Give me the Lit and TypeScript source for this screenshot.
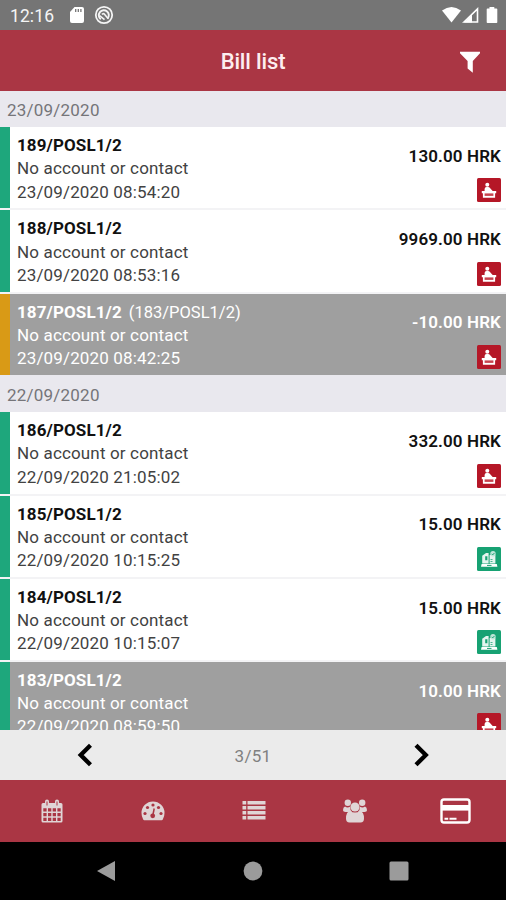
import { LitElement, html, css, svg, nothing } from "lit";
import { customElement, property } from "lit/decorators.js";

type Source = "desk" | "online";

interface Bill {
  no: string;
  ref?: string;
  time: string;
  amount: string;
  source: Source;
  bar?: "orange";
  muted?: boolean;
}

const groups: { date: string; bills: Bill[] }[] = [
  {
    date: "23/09/2020",
    bills: [
      { no: "189/POSL1/2", time: "23/09/2020 08:54:20", amount: "130.00 HRK", source: "desk" },
      { no: "188/POSL1/2", time: "23/09/2020 08:53:16", amount: "9969.00 HRK", source: "desk" },
      { no: "187/POSL1/2", ref: "(183/POSL1/2)", time: "23/09/2020 08:42:25", amount: "-10.00 HRK", source: "desk", bar: "orange", muted: true },
    ],
  },
  {
    date: "22/09/2020",
    bills: [
      { no: "186/POSL1/2", time: "22/09/2020 21:05:02", amount: "332.00 HRK", source: "desk" },
      { no: "185/POSL1/2", time: "22/09/2020 10:15:25", amount: "15.00 HRK", source: "online" },
      { no: "184/POSL1/2", time: "22/09/2020 10:15:07", amount: "15.00 HRK", source: "online" },
      { no: "183/POSL1/2", time: "22/09/2020 08:59:50", amount: "10.00 HRK", source: "desk", muted: true },
    ],
  },
];

const deskGlyph = svg`
  <rect width="24" height="24" rx="1.5" fill="#b51727"/>
  <g fill="#fff">
    <circle cx="10.3" cy="6.8" r="2"/>
    <path d="M7.6 13.2V11q0-2 2-2h1.4q1.4 0 2.2 1.2l2.7 3z"/>
    <path d="M4.8 13h14.4v2.2h-1.1v4.6H5.9v-4.6H4.8z"/>
  </g>
  <path d="M7.6 15.4h8.8v2.5H7.6z" fill="#c8434f"/>`;

const onlineGlyph = svg`
  <rect width="24" height="24" rx="1.5" fill="#17a273"/>
  <path d="M5.2 16.500V8.800L9 6h2.600v10.500zM12.600 8h5.800v8.500h-5.800z" fill="#e4f5ef"/>
  <path d="M4.600 17h15.200l.6 2.800H4z" fill="#fff"/>
  <path d="M8.200 9.300h2.200v4H8.200zM13.500 12.200h2v.9h-2zM13.500 14.200h2v.9h-2z" fill="#17a273"/>
  <circle cx="16" cy="6.800" r="2.700" fill="#bfe6d9"/>
  <path d="M14.600 6.800l1.100 1.100 1.800-2M10 18.400h4.500" stroke="#17a273" fill="none"/>`;

@customElement("bill-row")
export class BillRow extends LitElement {
  @property({ attribute: false }) bill!: Bill;

  static styles = css`
    :host { display: block; }
    .row { display: flex; height: 81.4px; box-sizing: border-box; background: #fff; color: #424242; border-left: 10px solid #1ea77c; padding: 7px 5px 0 7px; }
    .orange { border-left-color: #d99a16; }
    .muted { background: #9f9f9f; color: #fff; }
    .info { flex: 1; font-size: 17px; line-height: 23.2px; letter-spacing: 0.15px; white-space: nowrap; }
    .no { font-weight: 700; color: #111; letter-spacing: 0.1px; }
    .ref { margin-left: 7px; font-size: 16.5px; letter-spacing: 0; }
    .muted .no, .muted .amount { color: #fff; }
    .side { display: flex; flex-direction: column; align-items: flex-end; padding-top: 9.8px; }
    .amount { font-size: 17px; line-height: 24px; font-weight: 600; color: #111; letter-spacing: 0.12px; white-space: nowrap; }
    .glyph { display: block; width: 24px; height: 24px; margin-top: 10.5px; }
  `;

  render() {
    const b = this.bill;
    return html`
      <div class="row ${b.bar ?? ""} ${b.muted ? "muted" : ""}">
        <div class="info">
          <div><span class="no">${b.no}</span>${b.ref ? html`<span class="ref">${b.ref}</span>` : nothing}</div>
          <div class="contact">No account or contact</div>
          <div class="time">${b.time}</div>
        </div>
        <div class="side">
          <span class="amount">${b.amount}</span>
          <svg class="glyph" viewBox="0 0 24 24">${b.source === "desk" ? deskGlyph : onlineGlyph}</svg>
        </div>
      </div>`;
  }
}

@customElement("app-root")
export class AppRoot extends LitElement {
  static styles = css`
    :host { display: flex; flex-direction: column; width: 506px; height: 900px; overflow: hidden; font-family: Roboto, sans-serif; background: #000; }
    svg { display: block; flex: none; }
    .status { height: 30px; flex: none; background: #757575; display: flex; align-items: center; padding: 0 8px 0 10px; color: #f5f5f5; }
    .clock { font-size: 17.500px; font-weight: 400; letter-spacing: 0.1px; width: 59px; padding-top: 2px; }
    .disc { margin-left: 7px; }
    .gap { flex: 1; }
    .header { height: 61px; flex: none; background: #aa3644; display: grid; grid-template-columns: 1fr auto 1fr; align-items: center; color: #fff; padding: 2px 25px 0; box-sizing: border-box; }
    .title { grid-column: 2; font-size: 22px; font-weight: 500; letter-spacing: -0.15px; color: #fdeef0; }
    .filter { justify-self: end; }
    .list { flex: 1; min-height: 0; overflow: hidden; background: #f3f3f5; }
    .date { height: 36.1px; box-sizing: border-box; line-height: 39px; padding-left: 7px; background: #e9e8ee; color: #757579; font-size: 17px; letter-spacing: 0.22px; }
    .bills + .date { height: 37.2px; line-height: 41px; }
    .bills { display: flex; flex-direction: column; gap: 1.9px; }
    .pager { height: 50px; flex: none; background: #ebebeb; display: grid; grid-template-columns: 1fr 1fr 1fr; align-items: center; justify-items: center; color: #808080; font-size: 17px; letter-spacing: 0.3px; }
    .page { padding-top: 2px; }
    .tabs { height: 62px; flex: none; background: #aa3644; display: grid; grid-template-columns: repeat(5, 1fr); align-items: center; justify-items: center; color: #e0d5d6; padding-left: 1px; }
    .active { color: #fff; }
    .nav { height: 58px; flex: none; display: grid; grid-template-columns: repeat(3, 146px); justify-content: center; align-items: center; justify-items: center; color: #9b9b9b; }
  `;

  render() {
    return html`
      <div class="status">
        <span class="clock">12:16</span>
        <svg width="16" height="18" viewBox="0 0 16 18"><path d="M5.5 1H13q2 0 2 2v12q0 2-2 2H3q-2 0-2-2V6z" fill="#fff"/><path d="M6.7 3v3M9.3 3v3M11.9 3v3" stroke="#757575" stroke-width="1.3"/></svg>
        <svg class="disc" width="22" height="20" viewBox="0 0 22 20" fill="none" stroke="#f5f5f5"><circle cx="12" cy="10" r="8.200" stroke-width="1.800"/><path d="M8.800 14.200A5 5 0 1 1 15.500 13.600" stroke-width="1.900"/><path d="M10 9.500q1-1.500 2.500-.3l3.800 4.600M7.500 10.500l5 4.200" stroke-width="1.600"/></svg>
        <span class="gap"></span>
        <svg width="56" height="20" viewBox="0 0 56 20"><path d="M0 5.500Q9.500-1.500 19 5.500L9.500 17.500z" fill="#fff"/><path d="M22 17L35.500 4v13z" fill="none" stroke="#fff" stroke-width="1.600"/><path d="M22 17.500L30 9.500v8z" fill="#fff"/><path d="M45.500 3.500h2V2h4.800v1.500h2.200q.8 0 .8.8v12.900q0 .8-.8.8h-9q-.8 0-.8-.8V4.300q0-.8.8-.8z" fill="#fff"/></svg>
      </div>
      <div class="header">
        <span class="title">Bill list</span>
        <svg class="filter" width="22" height="22" viewBox="0 0 22 22"><path d="M1 .8h20v1.400l-7.200 7.800v11.700l-5.200-4.200V10L1 2.200z" fill="#fff"/></svg>
      </div>
      <div class="list">
        ${groups.map((g) => html`
          <div class="date">${g.date}</div>
          <div class="bills">${g.bills.map((b) => html`<bill-row .bill=${b}></bill-row>`)}</div>`)}
      </div>
      <div class="pager">
        <svg width="16" height="24" viewBox="0 0 16 24"><path d="M14.500 2.200L4.700 12l9.800 9.800" fill="none" stroke="#000" stroke-width="4.300"/></svg>
        <span class="page">3/51</span>
        <svg width="16" height="24" viewBox="0 0 16 24"><path d="M2 2.200l9.800 9.800L2 21.800" fill="none" stroke="#000" stroke-width="4.300"/></svg>
      </div>
      <div class="tabs">
        <svg width="22" height="24" viewBox="0 0 22 24"><path d="M2 4h2V2.500a2 2 0 0 1 4 0V4h6V2.500a2 2 0 0 1 4 0V4h2q1.500 0 1.500 1.500V22q0 1.500-1.500 1.500H2Q.5 23.500.5 22V5.500Q.5 4 2 4z" fill="currentColor"/><path d="M2.300 9.300h3.300v3.300H2.300zM7 9.300h3.300v3.300H7zM11.700 9.300H15v3.300h-3.300zM16.400 9.300h3.300v3.300h-3.300zM2.300 14h3.300v3.300H2.300zM7 14h3.300v3.300H7zM11.700 14H15v3.300h-3.300zM16.400 14h3.300v3.300h-3.300zM2.300 18.700h3.300V22H2.300zM7 18.700h3.300V22H7zM11.700 18.700H15V22h-3.300zM16.400 18.700h3.300V22h-3.300zM5.500 2.500h1v4h-1zM15.500 2.500h1v4h-1z" fill="#aa3644"/></svg>
        <svg width="24" height="20" viewBox="0 0 24 20"><path d="M12 .5A11.500 11.500 0 0 0 .5 12q0 3.700 1.700 6.500.4.700 1.100.7h17.400q.7 0 1.100-.7 1.700-2.800 1.700-6.500A11.500 11.500 0 0 0 12 .5z" fill="currentColor"/><g fill="#aa3644"><circle cx="4" cy="12.500" r="1.600"/><circle cx="6.500" cy="6.500" r="1.600"/><circle cx="12" cy="4" r="1.600"/><circle cx="17.500" cy="6.500" r="1.600"/><circle cx="20" cy="12.500" r="1.600"/><circle cx="11.700" cy="14.800" r="2.400"/></g><path d="M11.700 15l1.500-7.500" stroke="#aa3644" stroke-width="1.500"/></svg>
        <svg width="24" height="22" viewBox="0 0 24 22" fill="currentColor"><path d="M.5 1h3.700v3.500H.5zM5.500 1h18v3.500h-18zM.5 6h3.700v3.500H.5zM5.500 6h18v3.500h-18zM.5 11h3.700v3.500H.5zM5.500 11h18v3.500h-18zM.5 16h3.700v3.500H.5zM5.500 16h18v3.500h-18z"/></svg>
        <svg width="26" height="24" viewBox="0 0 26 24" fill="currentColor"><circle cx="5.800" cy="3.700" r="3.200"/><circle cx="20.200" cy="3.700" r="3.200"/><circle cx="13" cy="8" r="4.600"/><path d="M3 7.500q2.500 1.800 5 .2 0 3.500 2 5.300H3.500Q1 13 1 11.200 1 8 3 7.500zM23 7.500q-2.500 1.800-5 .2 0 3.500-2 5.300h6.500q2.500 0 2.500-1.800Q25 8 23 7.500z"/><path d="M8 12q5 3.200 10 0 4 .8 4 7.500 0 4-3.500 4h-11q-3.500 0-3.500-4Q4 12.800 8 12z"/></svg>
        <svg class="active" width="31" height="26" viewBox="0 0 31 26"><rect x="1.500" y="1.500" width="28" height="23" rx="2.500" fill="none" stroke="currentColor" stroke-width="2.400"/><path d="M2 7h27v5.600H2z" fill="currentColor"/><path d="M4.500 20.700h3.700M9.500 20.700h7" stroke="currentColor" stroke-width="2"/></svg>
      </div>
      <div class="nav">
        <svg width="20" height="22" viewBox="0 0 20 22"><path d="M18 1v20L0 11z" fill="currentColor"/></svg>
        <svg width="20" height="20" viewBox="0 0 20 20"><circle cx="10" cy="10" r="9.400" fill="currentColor"/></svg>
        <svg width="20" height="20" viewBox="0 0 20 20"><rect x=".5" y=".5" width="19" height="19" rx="1.500" fill="currentColor"/></svg>
      </div>`;
  }
}
